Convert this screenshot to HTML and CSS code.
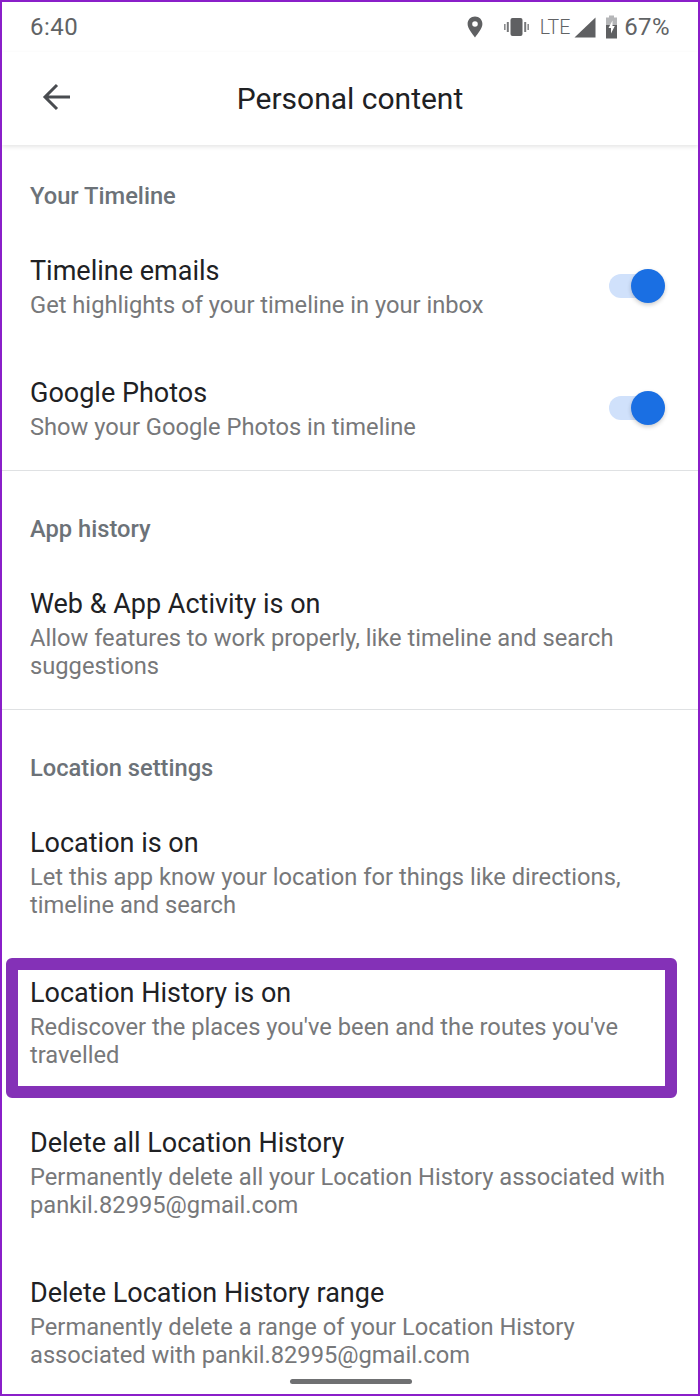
FILE: index.html
```html
<!DOCTYPE html>
<html lang="en">

<head>
    <meta charset="UTF-8">
    <meta name="viewport" content="width=device-width, initial-scale=1.0">
    <title>Personal content</title>
    <link rel="stylesheet" href="styles.css">
</head>

<body>
    <div class="screen">
        <!-- Status bar -->
        <div class="status-bar">
            <span class="time">6:40</span>
            <div class="status-icons">
                <svg class="icon-pin" width="16" height="22" viewBox="0 0 16 22">
                    <path fill="#5f6062" fill-rule="evenodd" d="M8 0.5C3.8 0.5 0.6 3.7 0.6 7.9C0.6 12.6 5.4 17.6 8 21.5C10.6 17.6 15.4 12.6 15.4 7.9C15.4 3.7 12.2 0.5 8 0.5ZM8 5.2A2.8 2.8 0 1 1 8 10.8A2.8 2.8 0 1 1 8 5.2Z" />
                </svg>
                <svg class="icon-vibrate" width="25" height="20" viewBox="0 0 25 20">
                    <rect x="6.5" y="1" width="12" height="18" rx="2" fill="#5f6062" />
                    <rect x="2.8" y="5" width="2" height="10" fill="#77787a" />
                    <rect x="20.2" y="5" width="2" height="10" fill="#77787a" />
                    <rect x="0" y="7" width="1.6" height="6" fill="#8a8b8d" />
                    <rect x="23.4" y="7" width="1.6" height="6" fill="#8a8b8d" />
                </svg>
                <span class="lte">LTE</span>
                <svg class="icon-signal" width="22" height="21" viewBox="0 0 22 21">
                    <path fill="#5f6062" d="M21.5 0.5V20.5H0.5Z" />
                </svg>
                <svg class="icon-battery" width="13" height="24" viewBox="0 0 13 24">
                    <path fill="#b5b6b8" d="M4 0.5H9V2.5H12V10H1V2.5H4Z" />
                    <path fill="#5f6062" d="M1 10H12V23.5H1Z" />
                    <path fill="#fff" d="M7.5 5.5L3.5 13H6V18.5L9.8 11H7.5Z" />
                </svg>
                <span class="battery-text">67%</span>
            </div>
        </div>

        <!-- Toolbar -->
        <div class="toolbar">
            <svg class="back-arrow" width="30" height="28" viewBox="0 0 30 28">
                <path fill="none" stroke="#494c50" stroke-width="3" d="M28 14H4M15 2L3 14L15 26" />
            </svg>
            <span class="toolbar-title">Personal content</span>
        </div>

        <div class="section first">
            <h2 class="section-title">Your Timeline</h2>
            <div class="item">
                <div>
                    <div class="item-title">Timeline emails</div>
                    <div class="item-desc">Get highlights of your timeline in your inbox</div>
                </div>
                <div class="switch"></div>
            </div>
            <div class="item">
                <div>
                    <div class="item-title">Google Photos</div>
                    <div class="item-desc">Show your Google Photos in timeline</div>
                </div>
                <div class="switch"></div>
            </div>
        </div>

        <div class="section">
            <h2 class="section-title">App history</h2>
            <div class="item">
                <div>
                    <div class="item-title">Web &amp; App Activity is on</div>
                    <div class="item-desc">Allow features to work properly, like timeline and search<br>suggestions</div>
                </div>
            </div>
        </div>

        <div class="section last">
            <h2 class="section-title">Location settings</h2>
            <div class="item">
                <div>
                    <div class="item-title">Location is on</div>
                    <div class="item-desc">Let this app know your location for things like directions,<br>timeline and search</div>
                </div>
            </div>
            <div class="item highlighted">
                <div>
                    <div class="item-title">Location History is on</div>
                    <div class="item-desc">Rediscover the places you've been and the routes you've<br>travelled</div>
                </div>
            </div>
            <div class="item">
                <div>
                    <div class="item-title">Delete all Location History</div>
                    <div class="item-desc">Permanently delete all your Location History associated with<br>pankil.82995@gmail.com</div>
                </div>
            </div>
            <div class="item">
                <div>
                    <div class="item-title">Delete Location History range</div>
                    <div class="item-desc">Permanently delete a range of your Location History<br>associated with pankil.82995@gmail.com</div>
                </div>
            </div>
        </div>

        <div class="home-bar"></div>
    </div>
</body>

</html>
```

FILE: styles.css
```css
* {
    box-sizing: border-box;
}

body {
    margin: 0;
    font-family: Roboto, "Liberation Sans", sans-serif;
    background-color: #fff;
}

.screen {
    position: relative;
    width: 700px;
    height: 1396px;
    overflow: hidden;
    border: 2px solid #8a1fc9;
    background-color: #fff;
}

/* Status bar */
.status-bar {
    height: 50px;
    display: flex;
    align-items: center;
    justify-content: space-between;
    padding: 0 28px;
}

.time {
    font-size: 24px;
    letter-spacing: 0.5px;
    color: #616365;
}

.status-icons {
    display: flex;
    align-items: center;
    color: #616365;
}

.icon-pin {
    margin-right: 1px;
}

.icon-vibrate {
    margin-left: 20px;
}

.lte {
    margin-left: 11px;
    font-size: 19.5px;
    font-weight: 300;
}

.icon-signal {
    margin-left: 4px;
}

.icon-battery {
    margin-left: 9px;
}

.battery-text {
    margin-left: 6px;
    font-size: 24px;
    letter-spacing: 0.4px;
}

/* Toolbar */
.toolbar {
    position: relative;
    height: 93px;
    display: flex;
    align-items: center;
    justify-content: center;
    box-shadow: 0 2px 4px rgba(0, 0, 0, 0.1);
}

.back-arrow {
    position: absolute;
    left: 40px;
    top: 31px;
}

.toolbar-title {
    font-size: 30px;
    color: #202124;
}

/* Sections */
.section {
    padding: 43px 28px 29px;
    border-bottom: 1px solid #dfe1e3;
}

.section.first {
    padding-top: 36px;
}

.section.last {
    border-bottom: none;
}

.section-title {
    margin: 0 0 43px;
    font-size: 23.7px;
    line-height: 30px;
    font-weight: 500;
    color: #6c7278;
}

.item {
    position: relative;
    display: flex;
    align-items: center;
    justify-content: space-between;
    margin-bottom: 57px;
}

.item:last-child {
    margin-bottom: 0;
}

.item-title {
    font-size: 27px;
    line-height: 34px;
    color: #202124;
}

.item-desc {
    margin-top: 3px;
    font-size: 23.7px;
    line-height: 28px;
    color: #77787a;
}

/* Purple box around the row */
.item.highlighted::after {
    content: "";
    position: absolute;
    left: -24px;
    right: -7px;
    top: -18px;
    bottom: -29px;
    border: 12px solid #8431b7;
    border-radius: 6px;
}

/* Toggle */
.switch {
    position: relative;
    width: 56px;
    height: 24px;
    margin-right: 5px;
    margin-top: -2px;
    border-radius: 12px;
    background-color: #d0e1fb;
}

.switch::after {
    content: "";
    position: absolute;
    right: 0;
    top: -5px;
    width: 34px;
    height: 34px;
    border-radius: 50%;
    background-color: #1a6fe3;
    box-shadow: 0 2px 4px rgba(0, 0, 0, 0.2);
}

.home-bar {
    position: absolute;
    left: 288px;
    bottom: 10px;
    width: 122px;
    height: 5px;
    border-radius: 3px;
    background-color: #6f7072;
}
```
